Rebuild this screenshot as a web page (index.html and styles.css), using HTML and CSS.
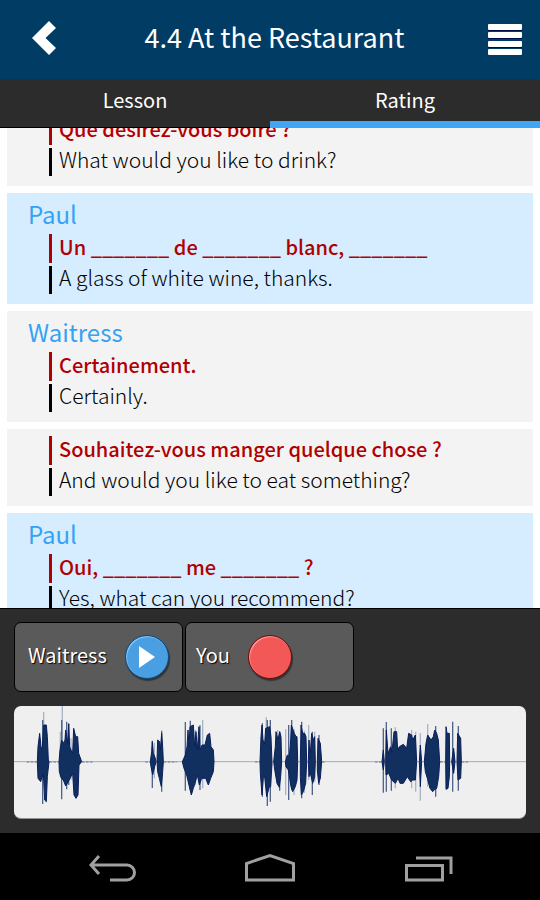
FILE: index.html
```html
<!DOCTYPE html>
<html lang="en">
<head>
<meta charset="utf-8">
<meta name="viewport" content="width=device-width, initial-scale=1">
<title>4.4 At the Restaurant</title>
<link rel="stylesheet" href="styles.css">
</head>
<body>
<div class="app">
  <header class="topbar">
    <button class="topbar-button" aria-label="Back">
      <svg width="24" height="34" viewBox="0 0 24 34"><path d="M17 0 24 7 13.500 17 24 27 17 34 0 17z" fill="#fff"/></svg>
    </button>
    <h1 class="title">4.4 At the Restaurant</h1>
    <button class="topbar-button" aria-label="Menu">
      <svg width="36" height="34" viewBox="0 0 36 34">
        <g fill="#000b4d"><rect x="1" y="4" width="34" height="6"/><rect x="1" y="12" width="34" height="6"/><rect x="1" y="21" width="34" height="6"/><rect x="1" y="28" width="34" height="6"/></g>
        <g fill="#fff"><rect x="1" y="3" width="34" height="6" rx="1"/><rect x="1" y="11" width="34" height="6" rx="1"/><rect x="1" y="20" width="34" height="6" rx="1"/><rect x="1" y="28" width="34" height="6" rx="1"/></g>
      </svg>
    </button>
  </header>
  <nav class="tabs">
    <a class="tab" href="#lesson">Lesson</a>
    <a class="tab tab-active" href="#rating">Rating</a>
  </nav>
  <main class="dialogue">
    <section class="card">
      <p class="line phrase">Que désirez-vous boire ?</p>
      <p class="line meaning">What would you like to drink?</p>
    </section>
    <section class="card card-paul">
      <h2 class="speaker">Paul</h2>
      <p class="line phrase">Un _______ de _______ blanc, _______</p>
      <p class="line meaning">A glass of white wine, thanks.</p>
    </section>
    <section class="card">
      <h2 class="speaker">Waitress</h2>
      <p class="line phrase">Certainement.</p>
      <p class="line meaning">Certainly.</p>
    </section>
    <section class="card">
      <p class="line phrase">Souhaitez-vous manger quelque chose ?</p>
      <p class="line meaning">And would you like to eat something?</p>
    </section>
    <section class="card card-paul">
      <h2 class="speaker">Paul</h2>
      <p class="line phrase">Oui, _______ me _______ ?</p>
      <p class="line meaning">Yes, what can you recommend?</p>
    </section>
  </main>
  <section class="player">
    <div class="controls">
      <button class="control">
        <span class="control-name">Waitress</span>
        <span class="disc disc-play"><svg width="16" height="22" viewBox="0 0 16 22"><path d="M0 0 16 11 0 22z" fill="#fff"/></svg></span>
      </button>
      <button class="control control-record">
        <span class="control-name">You</span>
        <span class="disc disc-record"></span>
      </button>
    </div>
    <div class="wave">
      <svg class="wave-graph" viewBox="42 18 1536 336" preserveAspectRatio="none" role="img" aria-label="Waveform">
        <path d="M42 185H1578" stroke="#a3acba" stroke-width="3"/>
        <path d="M80 186H112M148 186H176M246 186H278M436 186H452M491 186H530M765 186H780M966 186H975M1125 186H1145M1320 186H1335M1385 186H1404" stroke="#6a7b94" stroke-width="3" stroke-dasharray="8 4"/>
        <path d="M131 36V150M187 18V120M181 95V230M213 115V240M463 128V235M586 90V255M608 60V265M799 52V262M833 90V255M857 88V285M882 88V285M913 92V278M926 75V240M944 95V245M1186 82V265M1235 90V265M1247 95V275M1261 100V302M1283 72V260" stroke="#a9b4c4" stroke-width="4"/>
        <path d="M128 60V312M185 60V298M200 65V268M206 70V255M457 122V264M485 92V275M556 66V272M571 62V270M600 76V270M787 70V290M802 60V318M811 60V305M839 95V272M866 75V300M875 60V270M905 65V295M937 95V285M957 105V255M1150 85V278M1159 66V275M1174 85V272M1307 78V290M1358 65V275M1375 78V272" stroke="#50658a" stroke-width="4"/>
        <g fill="#12305f" stroke="#0a1e5c" stroke-width="3" stroke-linejoin="bevel">
          <path d="M112 185 114 140 119 100 123 140 127 145 131 75 139 75 142 110 145 180 147 185 142 230 139 305 134 300 130 220 122 245 114 235z"/>
          <path d="M177 185 180 150 185 120 190 130 195 120 197 90 203 130 206 72 209 140 213 150 218 160 221 85 227 110 233 110 236 160 245 185 237 195 234 285 228 295 222 285 218 220 210 235 205 245 197 258 190 240 184 235 178 215z"/>
          <path d="M451 185 455 155 457 125 460 160 466 175 468 185 464 200 458 225 453 200z"/>
          <path d="M471 185 473 120 479 125 481 150 485 100 488 140 490 185 488 215 484 260 478 235 473 215z"/>
          <path d="M547 185 556 165 561 140 564 90 567 140 570 80 580 75 584 140 588 95 592 150 597 80 600 150 606 135 615 135 622 105 629 100 633 140 640 150 642 185 640 215 632 235 625 255 617 235 605 235 598 255 592 225 585 250 580 265 574 285 568 260 560 225 552 205z"/>
          <path d="M780 185 783 110 786 75 789 120 794 130 797 85 809 80 813 110 816 190 812 260 808 260 800 290 794 230 790 235 786 285 781 220z"/>
          <path d="M821 185 826 140 828 95 834 120 839 95 843 110 845 185 842 230 838 262 831 250 825 215z"/>
          <path d="M856 185 862 165 868 170 872 120 874 75 883 100 888 110 891 110 893 185 891 240 886 260 878 275 873 260 865 210 858 200z"/>
          <path d="M901 185 903 75 908 100 914 100 918 110 920 185 917 250 910 275 904 285 901 230z"/>
          <path d="M925 185 927 120 930 175 935 100 940 120 944 110 946 185 944 230 938 250 930 215 927 230z"/>
          <path d="M952 185 954 115 961 130 965 185 961 235 956 250 952 210z"/>
          <path d="M1146 185 1150 150 1153 185 1150 210z"/>
          <path d="M1157 185 1159 90 1164 160 1172 140 1176 155 1182 95 1190 95 1193 150 1198 140 1210 133 1220 145 1226 100 1235 105 1238 120 1246 105 1250 185 1246 240 1238 240 1232 245 1222 230 1210 250 1200 250 1194 235 1186 250 1175 240 1166 220 1158 225z"/>
          <path d="M1258 185 1261 135 1265 185 1261 260z"/>
          <path d="M1273 185 1278 130 1283 105 1293 120 1300 110 1304 90 1310 100 1315 120 1319 185 1316 230 1310 265 1302 270 1298 275 1290 265 1282 235 1276 215z"/>
          <path d="M1337 185 1338 80 1341 100 1348 100 1349 185 1348 230 1344 265 1338 268z"/>
          <path d="M1355 185 1361 145 1365 185 1361 220z"/>
          <path d="M1371 185 1373 100 1382 115 1384 185 1382 235 1374 240z"/>
        </g>
      </svg>
    </div>
  </section>
  <footer class="system">
    <button class="system-button" aria-label="System back">
      <svg width="54" height="30" viewBox="0 0 54 30" fill="none" stroke="#a0a0a0" stroke-width="3"><path d="M15 3 7 12l8 9M7 12h36a7 7 0 0 1 0 15H26"/></svg>
    </button>
    <button class="system-button" aria-label="Home">
      <svg width="54" height="30" viewBox="0 0 54 30" fill="none" stroke="#a0a0a0" stroke-width="3"><path d="M3.500 27V10.500L27 2.500 50.500 10.500V27z"/></svg>
    </button>
    <button class="system-button" aria-label="Recent apps">
      <svg width="54" height="30" viewBox="0 0 54 30" fill="none" stroke="#a0a0a0" stroke-width="3"><path d="M4.500 12.500h36V27h-36zM14 5h35v16"/></svg>
    </button>
  </footer>
</div>
</body>
</html>
```
FILE: styles.css
```css
* { box-sizing: border-box; }
body {
  margin: 0;
  background: #fff;
  font-family: "Noto Sans CJK SC", sans-serif;
  font-size: 20px;
  color: #000;
}
button { font: inherit; border: 0; padding: 0; background: none; color: inherit; }
h1, h2, p { margin: 0; font-weight: 400; }
svg { display: block; }
.app { display: flex; flex-direction: column; height: 100vh; }
.topbar {
  display: flex;
  align-items: center;
  justify-content: space-between;
  height: 79px;
  padding: 0 17px 4px 32px;
  background: #003c64;
  color: #fff;
}
.topbar-button { display: flex; }
.title { padding: 0 0 2px 6px; font-size: 27px; line-height: 40px; }
.tabs { display: flex; height: 49px; background: #2c2c2c; border-bottom: 1px solid #000; }
.tab {
  flex: 1;
  height: 49px;
  line-height: 41px;
  text-align: center;
  color: #fff;
  text-decoration: none;
}
.tab-active { border-bottom: 7px solid #3ea6f4; }
.dialogue {
  display: flex;
  flex-direction: column;
  flex: 1;
  min-height: 0;
  gap: 7px;
  overflow: hidden;
  padding: 0 7px;
}
.card { flex: none; padding: 7px 21px 10px; background: #f3f3f3; }
.card:first-child { margin-top: -19px; }
.card-paul { background: #d6ecff; }
.speaker { height: 34px; font-size: 24px; line-height: 28px; color: #35a3f3; }
.line { margin-left: 21px; padding-left: 7px; border-left: 3px solid #000; }
.phrase {
  margin-bottom: 3px;
  padding-bottom: 4px;
  border-color: #b00000;
  font-weight: 500;
  line-height: 25px;
  color: #b00000;
}
.meaning { padding-bottom: 6px; font-size: 21px; font-weight: 300; line-height: 22px; }
.player { padding: 13px 14px 14px; background: #2c2c2c; border-top: 1px solid #000; }
.controls { display: flex; gap: 2px; margin-bottom: 14px; }
.control {
  display: flex;
  align-items: center;
  gap: 18px;
  width: 169px;
  height: 70px;
  padding: 0 13px;
  border: 1px solid #000;
  border-radius: 7px;
  background: #5a5a5a;
  color: #fff;
  text-shadow: 1px 1px 1px #000;
}
.control-record { padding-left: 10px; }
.control-name { padding-bottom: 6px; }
.disc {
  display: flex;
  align-items: center;
  justify-content: center;
  width: 44px;
  height: 44px;
  border-radius: 50%;
}
.disc-play { background: #4a9ee2; border: 1px solid #0d4a80; box-shadow: 1px 2px 1px #333, inset 1px 1px 1px #8cc8f8; }
.disc-record { background: #f25858; border: 1px solid #6d0c0c; box-shadow: 1px 2px 1px #333, inset 1px 1px 1px #ff9c9c; }
.wave { height: 113px; border-radius: 7px; background: #efefef; border-bottom: 1px solid #8f9496; overflow: hidden; }
.wave-graph { width: 100%; height: 112px; }
.system {
  display: flex;
  justify-content: space-around;
  align-items: center;
  height: 67px;
  padding: 3px 31px 0;
  background: #000;
}
```
